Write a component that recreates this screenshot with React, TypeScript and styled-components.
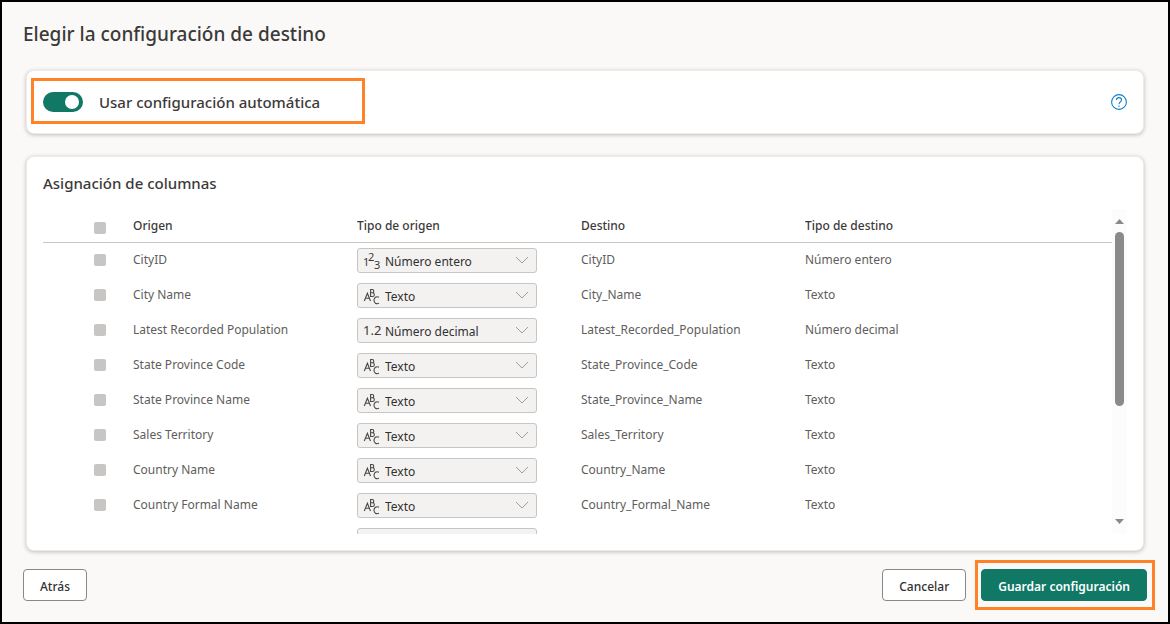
import React from "react";
import styled, { createGlobalStyle } from "styled-components";

const GlobalStyle = createGlobalStyle`
  *, *::before, *::after { box-sizing: border-box; }
  body {
    margin: 0;
    background: #faf9f8;
    color: #3b3a39;
    font-family: "Noto Sans", "Open Sans", sans-serif;
    font-size: 12px;
    line-height: 20px;
  }
  button, select, input { font: inherit; color: inherit; margin: 0; }
`;

const Page = styled.main`
  display: flex;
  flex-direction: column;
  min-height: 100vh;
  padding: 18px 24px 11px 24px;
  border: 2px solid #000;
`;

const Title = styled.h1`
  margin: 0 -3px 22px;
  font-size: 19px;
  line-height: 28px;
  font-weight: 500;
`;

const Card = styled.section`
  background: #fff;
  border: 1px solid #edebe9;
  border-radius: 8px;
  box-shadow: 0 1px 4px rgba(0, 0, 0, 0.24);
`;

const SettingsCard = styled(Card)`
  display: flex;
  align-items: center;
  justify-content: space-between;
  padding: 7px 16px 9px 4px;
  margin-bottom: 22px;
`;

const Highlight = styled.div<{ $padding: string; $width?: string }>`
  border: 3px solid #ff8227;
  padding: ${(p) => p.$padding};
  width: ${(p) => p.$width ?? "auto"};
`;

const SwitchLabel = styled.label`
  display: flex;
  align-items: center;
  gap: 16px;
  font-size: 15px;
  font-weight: 500;
`;

const Switch = styled.input`
  appearance: none;
  display: flex;
  align-items: center;
  justify-content: flex-start;
  width: 40px;
  height: 20px;
  padding: 0 4px;
  border-radius: 10px;
  background: #8a8886;
  &::before {
    content: "";
    width: 14px;
    height: 14px;
    border-radius: 50%;
    background: #fff;
  }
  &:checked {
    justify-content: flex-end;
    background: #117865;
  }
`;

const HelpButton = styled.button`
  display: flex;
  padding: 2px 0 0;
  border: 0;
  background: none;
`;

const MappingCard = styled(Card)`
  padding: 16px;
  margin-bottom: 9px;
`;

const CardTitle = styled.h2`
  margin: 0 0 16px;
  font-size: 15px;
  line-height: 20px;
  font-weight: 500;
`;

const ScrollArea = styled.div`
  display: flex;
  height: 325px;
`;

const Viewport = styled.div`
  flex: 1;
  overflow-y: auto;
  scrollbar-width: none;
`;

const Table = styled.table`
  width: 100%;
  table-layout: fixed;
  border-collapse: separate;
  border-spacing: 0;
`;

const HeadCell = styled.th<{ $width?: string }>`
  position: sticky;
  top: 0;
  z-index: 2;
  width: ${(p) => p.$width ?? "auto"};
  height: 34px;
  padding: 0;
  border-bottom: 1px solid #c8c6c4;
  background: #fff;
  font-weight: 500;
  text-align: left;
`;

const Cell = styled.td`
  height: 35px;
  padding: 0 0 2px;
  color: #605e5c;
`;

const CheckCell = styled(Cell)`
  padding: 0 0 1px 51px;
`;

const CheckHeadCell = styled(HeadCell)`
  padding: 4px 0 0 51px;
`;

const FieldCell = styled(Cell)`
  padding: 0;
`;

const Check = styled.input`
  appearance: none;
  display: block;
  width: 12px;
  height: 12px;
  border-radius: 2px;
  background: #c8c6c4;
`;

const SelectBox = styled.div`
  display: grid;
  grid-template-columns: 28px 1fr 28px;
  align-items: center;
  width: 180px;
  color: #323130;
  > svg {
    grid-row: 1;
    pointer-events: none;
    z-index: 1;
  }
`;

const Select = styled.select`
  appearance: none;
  grid-row: 1;
  grid-column: 1 / -1;
  height: 25px;
  padding: 2px 27px 0 27px;
  border: 1px solid #c8c6c4;
  border-radius: 3px;
  background: #f3f2f1;
`;

const TypeGlyph = styled.svg`
  grid-column: 1;
  width: 20px;
  height: 21px;
  margin-left: 6px;
  fill: #3b3a39;
`;

const Chevron = styled.svg`
  grid-column: 3;
  width: 14px;
  height: 8px;
  margin: 0 0 2px 6px;
  fill: none;
  stroke: #a19f9d;
`;

const ScrollTrack = styled.div`
  display: flex;
  flex-direction: column;
  align-items: center;
  width: 15px;
  padding: 10px 0;
  background: #fcfcfc;
`;

const ScrollArrow = styled.svg`
  width: 9px;
  height: 5px;
  fill: #8a8a8a;
`;

const Thumb = styled.div`
  width: 9px;
  height: 174px;
  margin: 8px 0 auto;
  border-radius: 5px;
  background: #8a8a8a;
`;

const Footer = styled.footer`
  display: flex;
  align-items: center;
  margin: 0 -11px 0 -3px;
`;

const Button = styled.button<{ $primary?: boolean }>`
  height: 32px;
  padding: 3px 16px 0;
  border: 1px solid ${(p) => (p.$primary ? "#117865" : "#8a8886")};
  border-radius: 4px;
  background: ${(p) => (p.$primary ? "#117865" : "#fff")};
  color: ${(p) => (p.$primary ? "#fff" : "#323130")};
  font-weight: ${(p) => (p.$primary ? 600 : 500)};
  white-space: nowrap;
`;

const Actions = styled.div`
  display: flex;
  align-items: center;
  gap: 9px;
  margin-left: auto;
`;

type DataType = "Número entero" | "Texto" | "Número decimal";

const types: DataType[] = ["Número entero", "Texto", "Número decimal"];

const columns: { source: string; type?: DataType }[] = [
  { source: "CityID", type: "Número entero" },
  { source: "City Name", type: "Texto" },
  { source: "Latest Recorded Population", type: "Número decimal" },
  { source: "State Province Code", type: "Texto" },
  { source: "State Province Name", type: "Texto" },
  { source: "Sales Territory", type: "Texto" },
  { source: "Country Name", type: "Texto" },
  { source: "Country Formal Name", type: "Texto" },
  { source: "" },
];

function TypeIcon({ type }: { type: DataType }) {
  if (type === "Número decimal") {
    return (
      <TypeGlyph viewBox="0 0 20 21" aria-hidden>
        <text x="0" y="15" fontSize="13" fontWeight="400">1.2</text>
      </TypeGlyph>
    );
  }
  if (type === "Número entero") {
    return (
      <TypeGlyph viewBox="0 0 20 21" aria-hidden>
        <text x="0" y="16" fontSize="11">1</text>
        <text x="5" y="11" fontSize="11">2</text>
        <text x="11" y="19" fontSize="11">3</text>
      </TypeGlyph>
    );
  }
  return (
    <TypeGlyph viewBox="0 0 20 21" aria-hidden>
      <g fill="none" stroke="#4a4846" strokeWidth="1.1">
        <path d="M1.3 16L4.4 8.2L7.5 16M2.4 13.3H6.4" />
        <path d="M7.6 4.5V11.5H9.4C12 11.5 12 7.8 9.4 7.8H7.6H9.2C11.3 7.8 11.3 4.5 9.2 4.5Z" />
        <path d="M16 12.2C13.2 10.9 11 12.6 11 15.3S13.2 19.4 16 18.3" />
      </g>
    </TypeGlyph>
  );
}

export default function App() {
  return (
    <Page>
      <GlobalStyle />
      <Title>Elegir la configuración de destino</Title>

      <SettingsCard>
        <Highlight $padding="11px 9px 9px" $width="334px">
          <SwitchLabel>
            <Switch type="checkbox" role="switch" defaultChecked />
            Usar configuración automática
          </SwitchLabel>
        </Highlight>
        <HelpButton type="button" aria-label="Ayuda">
          <svg width="16" height="16" viewBox="0 0 16 16" fill="none" stroke="#0f7fc9">
            <circle cx="8" cy="8" r="7.4" strokeWidth="1.1" />
            <path d="M5.5 6.1C5.5 4.6 6.6 3.6 8 3.6S10.5 4.6 10.5 6C10.5 7.9 8 8 8 10.2" strokeWidth="1.1" />
            <circle cx="8" cy="12.2" r="0.7" fill="#0f7fc9" stroke="none" />
          </svg>
        </HelpButton>
      </SettingsCard>

      <MappingCard>
        <CardTitle>Asignación de columnas</CardTitle>
        <ScrollArea>
          <Viewport>
            <Table>
              <thead>
                <tr>
                  <CheckHeadCell $width="90px">
                    <Check type="checkbox" disabled aria-label="Seleccionar todo" />
                  </CheckHeadCell>
                  <HeadCell $width="224px">Origen</HeadCell>
                  <HeadCell $width="224px">Tipo de origen</HeadCell>
                  <HeadCell $width="224px">Destino</HeadCell>
                  <HeadCell>Tipo de destino</HeadCell>
                </tr>
              </thead>
              <tbody>
                {columns.map(({ source, type }) => (
                  <tr key={source}>
                    <CheckCell>
                      <Check type="checkbox" disabled aria-label={source || "Columna"} />
                    </CheckCell>
                    <Cell>{source}</Cell>
                    <FieldCell>
                      <SelectBox>
                        <Select defaultValue={type} aria-label={`Tipo de origen de ${source || "columna"}`}>
                          {type && types.map((t) => <option key={t}>{t}</option>)}
                        </Select>
                        {type && <TypeIcon type={type} />}
                        <Chevron viewBox="0 0 14 8" aria-hidden>
                          <path d="M1 1l6 6 6-6" />
                        </Chevron>
                      </SelectBox>
                    </FieldCell>
                    <Cell>{source.replaceAll(" ", "_")}</Cell>
                    <Cell>{type}</Cell>
                  </tr>
                ))}
              </tbody>
            </Table>
          </Viewport>
          <ScrollTrack aria-hidden>
            <ScrollArrow viewBox="0 0 9 5"><path d="M4.5 0L9 5H0z" /></ScrollArrow>
            <Thumb />
            <ScrollArrow viewBox="0 0 9 5"><path d="M4.5 5L0 0h9z" /></ScrollArrow>
          </ScrollTrack>
        </ScrollArea>
      </MappingCard>

      <Footer>
        <Button type="button">Atrás</Button>
        <Actions>
          <Button type="button">Cancelar</Button>
          <Highlight $padding="6px 5px 6px 3px">
            <Button type="button" $primary>Guardar configuración</Button>
          </Highlight>
        </Actions>
      </Footer>
    </Page>
  );
}
